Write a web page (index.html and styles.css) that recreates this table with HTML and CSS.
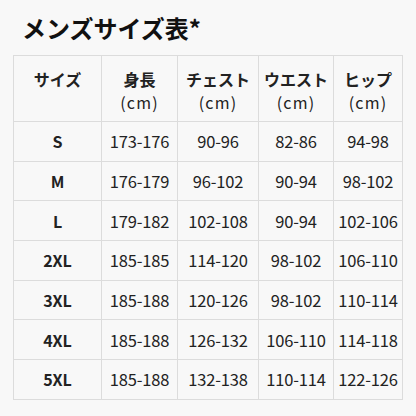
FILE: index.html
```html
<!DOCTYPE html>
<html lang="ja">
<head>
<meta charset="utf-8">
<link rel="stylesheet" href="styles.css">
</head>
<body>
<div class="page">
  <h1 class="title">メンズサイズ表*</h1>
  <table class="sizes">
    <colgroup>
      <col class="c1"><col class="c2"><col class="c3"><col class="c4"><col class="c5">
    </colgroup>
    <thead>
      <tr>
        <th><span class="h">サイズ</span></th>
        <th><span class="h">身長</span><span class="u">(cm)</span></th>
        <th><span class="h">チェスト</span><span class="u">(cm)</span></th>
        <th><span class="h">ウエスト</span><span class="u">(cm)</span></th>
        <th><span class="h">ヒップ</span><span class="u">(cm)</span></th>
      </tr>
    </thead>
    <tbody>
      <tr><td class="sz">S</td><td>173-176</td><td>90-96</td><td>82-86</td><td>94-98</td></tr>
      <tr><td class="sz">M</td><td>176-179</td><td>96-102</td><td>90-94</td><td>98-102</td></tr>
      <tr><td class="sz">L</td><td>179-182</td><td>102-108</td><td>90-94</td><td>102-106</td></tr>
      <tr><td class="sz">2XL</td><td>185-185</td><td>114-120</td><td>98-102</td><td>106-110</td></tr>
      <tr><td class="sz">3XL</td><td>185-188</td><td>120-126</td><td>98-102</td><td>110-114</td></tr>
      <tr><td class="sz">4XL</td><td>185-188</td><td>126-132</td><td>106-110</td><td>114-118</td></tr>
      <tr><td class="sz">5XL</td><td>185-188</td><td>132-138</td><td>110-114</td><td>122-126</td></tr>
    </tbody>
  </table>
</div>
</body>
</html>
```
FILE: styles.css
```css
html, body {
  margin: 0;
  padding: 0;
  background: #f8f8f8;
}
body {
  font-family: "Noto Sans CJK JP", "Noto Sans", sans-serif;
  color: #222;
}
.page {
  padding: 12px 14px 0 13px;
}
.title {
  margin: 0 0 11px 9px;
  font-size: 24px;
  line-height: 32px;
  font-weight: 700;
  color: #111;
}
.sizes {
  border-collapse: collapse;
  width: 389px;
  table-layout: fixed;
}
.c1 { width: 88px; }
.c2 { width: 76px; }
.c3 { width: 81px; }
.c4 { width: 75px; }
.c5 { width: 69px; }
.sizes th, .sizes td {
  border: 1px solid #dcdcdc;
  text-align: center;
  vertical-align: middle;
  padding: 0;
  font-size: 16.5px;
}
.sizes th {
  height: 53px;
  padding-top: 12px;
  vertical-align: top;
  font-weight: 400;
  font-size: 16px;
}
.sizes th .h {
  display: block;
  font-weight: 700;
  line-height: 23px;
}
.sizes th .u {
  display: block;
  line-height: 23px;
  font-size: 16px;
  letter-spacing: 1.2px;
}
.sizes td {
  height: 38.7px;
  letter-spacing: -0.2px;
}
.sizes td.sz {
  font-weight: 700;
  font-size: 16px;
  letter-spacing: 0;
}
```
